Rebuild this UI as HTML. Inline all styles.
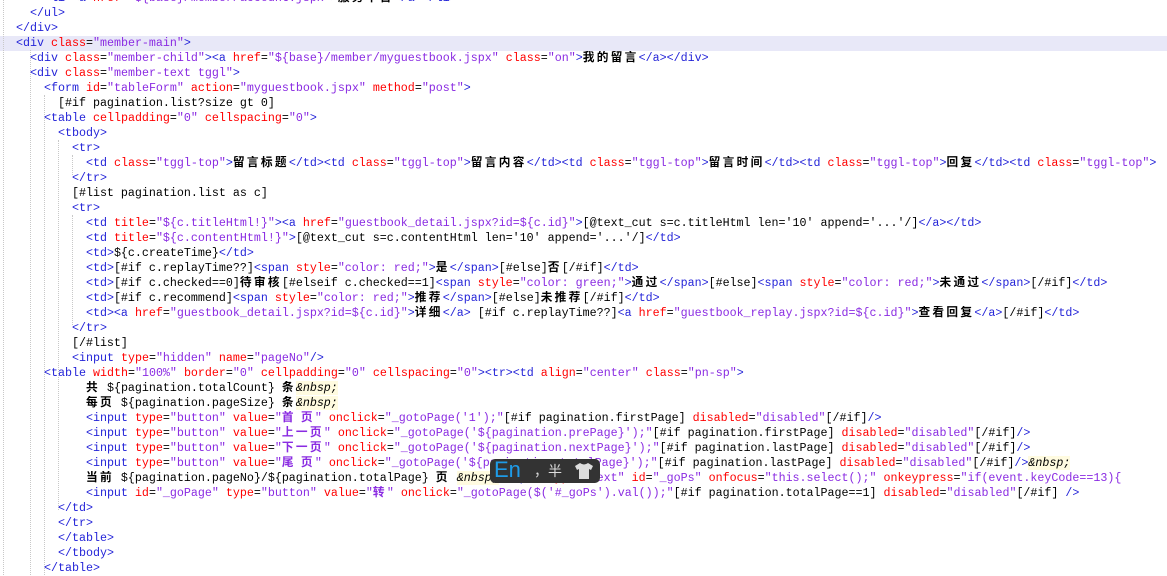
<!DOCTYPE html>
<html><head><meta charset="utf-8"><style>
body{margin:0;width:1167px;height:575px;overflow:hidden;background:#fff;position:relative}
.code{position:absolute;left:16px;top:-9px;font-family:"Liberation Mono",monospace;font-size:11.67px;line-height:15px;color:#000}
.l{height:15px;white-space:pre;overflow:hidden}
.hl{position:absolute;left:0;top:36px;width:1167px;height:15px;background:#e8e8f8}
.t{color:#2424d8}.a{color:#f00}.v{color:#8a2be2}
.c{font-family:"Noto Sans CJK SC",sans-serif;font-weight:bold;letter-spacing:2.33px;display:inline-block;height:15px;line-height:15px;vertical-align:top;font-size:11.67px;position:relative;top:-2px}
.n{font-style:italic;background:#fffbe0}
.g{position:absolute;top:0;width:0;border-left:1px dotted #c8c8c8}
.ime{position:absolute;left:490px;top:459px;width:110px;height:24px;background:#333;border-radius:5px;font-family:"Liberation Sans","Noto Sans CJK SC",sans-serif}
</style></head><body>
<div class="hl"></div>
<div class="g" style="left:3px;height:575px"></div>
<div class="g" style="left:30px;top:50px;height:525px"></div>
<div class="g" style="left:44px;top:95px;height:480px"></div>
<div class="g" style="left:58px;top:140px;height:370px"></div>
<div class="g" style="left:72px;top:155px;height:20px"></div>
<div class="g" style="left:72px;top:215px;height:110px"></div>
<div class="code"><div class="l">    <span class="t">&lt;li&gt;&lt;a</span> <span class="a">href</span>=<span class="v">"${base}/member/account.jspx"</span><span class="t">&gt;</span><span class="c">服务平台</span><span class="t">&lt;/a&gt;&lt;/li&gt;</span></div><div class="l">  <span class="t">&lt;/ul&gt;</span></div><div class="l"><span class="t">&lt;/div&gt;</span></div><div class="l"><span class="t">&lt;div</span> <span class="a">class</span>=<span class="v">"member-main"</span><span class="t">&gt;</span></div><div class="l">  <span class="t">&lt;div</span> <span class="a">class</span>=<span class="v">"member-child"</span><span class="t">&gt;&lt;a</span> <span class="a">href</span>=<span class="v">"${base}/member/myguestbook.jspx"</span> <span class="a">class</span>=<span class="v">"on"</span><span class="t">&gt;</span><span class="c">我的留言</span><span class="t">&lt;/a&gt;&lt;/div&gt;</span></div><div class="l">  <span class="t">&lt;div</span> <span class="a">class</span>=<span class="v">"member-text tggl"</span><span class="t">&gt;</span></div><div class="l">    <span class="t">&lt;form</span> <span class="a">id</span>=<span class="v">"tableForm"</span> <span class="a">action</span>=<span class="v">"myguestbook.jspx"</span> <span class="a">method</span>=<span class="v">"post"</span><span class="t">&gt;</span></div><div class="l">      [#if pagination.list?size gt 0]</div><div class="l">    <span class="t">&lt;table</span> <span class="a">cellpadding</span>=<span class="v">"0"</span> <span class="a">cellspacing</span>=<span class="v">"0"</span><span class="t">&gt;</span></div><div class="l">      <span class="t">&lt;tbody&gt;</span></div><div class="l">        <span class="t">&lt;tr&gt;</span></div><div class="l">          <span class="t">&lt;td</span> <span class="a">class</span>=<span class="v">"tggl-top"</span><span class="t">&gt;</span><span class="c">留言标题</span><span class="t">&lt;/td&gt;&lt;td</span> <span class="a">class</span>=<span class="v">"tggl-top"</span><span class="t">&gt;</span><span class="c">留言内容</span><span class="t">&lt;/td&gt;&lt;td</span> <span class="a">class</span>=<span class="v">"tggl-top"</span><span class="t">&gt;</span><span class="c">留言时间</span><span class="t">&lt;/td&gt;&lt;td</span> <span class="a">class</span>=<span class="v">"tggl-top"</span><span class="t">&gt;</span><span class="c">回复</span><span class="t">&lt;/td&gt;&lt;td</span> <span class="a">class</span>=<span class="v">"tggl-top"</span><span class="t">&gt;</span></div><div class="l">        <span class="t">&lt;/tr&gt;</span></div><div class="l">        [#list pagination.list as c]</div><div class="l">        <span class="t">&lt;tr&gt;</span></div><div class="l">          <span class="t">&lt;td</span> <span class="a">title</span>=<span class="v">"${c.titleHtml!}"</span><span class="t">&gt;&lt;a</span> <span class="a">href</span>=<span class="v">"guestbook_detail.jspx?id=${c.id}"</span><span class="t">&gt;</span>[@text_cut s=c.titleHtml len='10' append='...'/]<span class="t">&lt;/a&gt;&lt;/td&gt;</span></div><div class="l">          <span class="t">&lt;td</span> <span class="a">title</span>=<span class="v">"${c.contentHtml!}"</span><span class="t">&gt;</span>[@text_cut s=c.contentHtml len='10' append='...'/]<span class="t">&lt;/td&gt;</span></div><div class="l">          <span class="t">&lt;td&gt;</span>${c.createTime}<span class="t">&lt;/td&gt;</span></div><div class="l">          <span class="t">&lt;td&gt;</span>[#if c.replayTime??]<span class="t">&lt;span</span> <span class="a">style</span>=<span class="v">"color: red;"</span><span class="t">&gt;</span><span class="c">是</span><span class="t">&lt;/span&gt;</span>[#else]<span class="c">否</span>[/#if]<span class="t">&lt;/td&gt;</span></div><div class="l">          <span class="t">&lt;td&gt;</span>[#if c.checked==0]<span class="c">待审核</span>[#elseif c.checked==1]<span class="t">&lt;span</span> <span class="a">style</span>=<span class="v">"color: green;"</span><span class="t">&gt;</span><span class="c">通过</span><span class="t">&lt;/span&gt;</span>[#else]<span class="t">&lt;span</span> <span class="a">style</span>=<span class="v">"color: red;"</span><span class="t">&gt;</span><span class="c">未通过</span><span class="t">&lt;/span&gt;</span>[/#if]<span class="t">&lt;/td&gt;</span></div><div class="l">          <span class="t">&lt;td&gt;</span>[#if c.recommend]<span class="t">&lt;span</span> <span class="a">style</span>=<span class="v">"color: red;"</span><span class="t">&gt;</span><span class="c">推荐</span><span class="t">&lt;/span&gt;</span>[#else]<span class="c">未推荐</span>[/#if]<span class="t">&lt;/td&gt;</span></div><div class="l">          <span class="t">&lt;td&gt;&lt;a</span> <span class="a">href</span>=<span class="v">"guestbook_detail.jspx?id=${c.id}"</span><span class="t">&gt;</span><span class="c">详细</span><span class="t">&lt;/a&gt;</span> [#if c.replayTime??]<span class="t">&lt;a</span> <span class="a">href</span>=<span class="v">"guestbook_replay.jspx?id=${c.id}"</span><span class="t">&gt;</span><span class="c">查看回复</span><span class="t">&lt;/a&gt;</span>[/#if]<span class="t">&lt;/td&gt;</span></div><div class="l">        <span class="t">&lt;/tr&gt;</span></div><div class="l">        [/#list]</div><div class="l">        <span class="t">&lt;input</span> <span class="a">type</span>=<span class="v">"hidden"</span> <span class="a">name</span>=<span class="v">"pageNo"</span><span class="t">/&gt;</span></div><div class="l">    <span class="t">&lt;table</span> <span class="a">width</span>=<span class="v">"100%"</span> <span class="a">border</span>=<span class="v">"0"</span> <span class="a">cellpadding</span>=<span class="v">"0"</span> <span class="a">cellspacing</span>=<span class="v">"0"</span><span class="t">&gt;&lt;tr&gt;&lt;td</span> <span class="a">align</span>=<span class="v">"center"</span> <span class="a">class</span>=<span class="v">"pn-sp"</span><span class="t">&gt;</span></div><div class="l">          <span class="c">共</span> ${pagination.totalCount} <span class="c">条</span><span class="n">&amp;nbsp;</span></div><div class="l">          <span class="c">每页</span> ${pagination.pageSize} <span class="c">条</span><span class="n">&amp;nbsp;</span></div><div class="l">          <span class="t">&lt;input</span> <span class="a">type</span>=<span class="v">"button"</span> <span class="a">value</span>=<span class="v">"<span class="c">首 页</span>"</span> <span class="a">onclick</span>=<span class="v">"_gotoPage('1');"</span>[#if pagination.firstPage] <span class="a">disabled</span>=<span class="v">"disabled"</span>[/#if]<span class="t">/&gt;</span></div><div class="l">          <span class="t">&lt;input</span> <span class="a">type</span>=<span class="v">"button"</span> <span class="a">value</span>=<span class="v">"<span class="c">上一页</span>"</span> <span class="a">onclick</span>=<span class="v">"_gotoPage('${pagination.prePage}');"</span>[#if pagination.firstPage] <span class="a">disabled</span>=<span class="v">"disabled"</span>[/#if]<span class="t">/&gt;</span></div><div class="l">          <span class="t">&lt;input</span> <span class="a">type</span>=<span class="v">"button"</span> <span class="a">value</span>=<span class="v">"<span class="c">下一页</span>"</span> <span class="a">onclick</span>=<span class="v">"_gotoPage('${pagination.nextPage}');"</span>[#if pagination.lastPage] <span class="a">disabled</span>=<span class="v">"disabled"</span>[/#if]<span class="t">/&gt;</span></div><div class="l">          <span class="t">&lt;input</span> <span class="a">type</span>=<span class="v">"button"</span> <span class="a">value</span>=<span class="v">"<span class="c">尾 页</span>"</span> <span class="a">onclick</span>=<span class="v">"_gotoPage('${pagination.totalPage}');"</span>[#if pagination.lastPage] <span class="a">disabled</span>=<span class="v">"disabled"</span>[/#if]<span class="t">/&gt;</span><span class="n">&amp;nbsp;</span></div><div class="l">          <span class="c">当前</span> ${pagination.pageNo}/${pagination.totalPage} <span class="c">页</span> <span class="n">&amp;nbsp;</span><span class="t">&lt;input</span> <span class="a">type</span>=<span class="v">"text"</span> <span class="a">id</span>=<span class="v">"_goPs"</span> <span class="a">onfocus</span>=<span class="v">"this.select();"</span> <span class="a">onkeypress</span>=<span class="v">"if(event.keyCode==13){</span></div><div class="l">          <span class="t">&lt;input</span> <span class="a">id</span>=<span class="v">"_goPage"</span> <span class="a">type</span>=<span class="v">"button"</span> <span class="a">value</span>=<span class="v">"<span class="c">转</span>"</span> <span class="a">onclick</span>=<span class="v">"_gotoPage($('#_goPs').val());"</span>[#if pagination.totalPage==1] <span class="a">disabled</span>=<span class="v">"disabled"</span>[/#if] <span class="t">/&gt;</span></div><div class="l">      <span class="t">&lt;/td&gt;</span></div><div class="l">      <span class="t">&lt;/tr&gt;</span></div><div class="l">      <span class="t">&lt;/table&gt;</span></div><div class="l">      <span class="t">&lt;/tbody&gt;</span></div><div class="l">    <span class="t">&lt;/table&gt;</span></div></div>
<div class="ime">
<span style="position:absolute;left:4px;top:-2px;color:#1e9be8;font-size:22px">En</span>
<span style="position:absolute;left:44px;top:2px;color:#ddd;font-size:14px">，半</span>
<svg style="position:absolute;left:84px;top:3px" width="20" height="18" viewBox="0 0 20 18"><path d="M6 1 L1 4 L3 8 L5 7 L5 17 L15 17 L15 7 L17 8 L19 4 L14 1 Q10 4 6 1Z" fill="#ddd"/></svg>
</div>
</body></html>
